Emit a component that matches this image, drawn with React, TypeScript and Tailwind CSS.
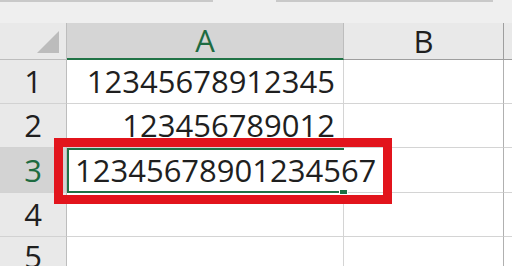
const rows = [
  { n: '1', value: '12345678912345' },
  { n: '2', value: '123456789012' },
  { n: '3', value: '12345678901234567', active: true },
  { n: '4', value: '' },
  { n: '5', value: '' },
];

const heights = ['h-[44px]', 'h-[44px]', 'h-[45px]', 'h-[44px]', 'h-[40px]'];

export default function App() {
  return (
    <div className="relative w-[512px] h-[266px] overflow-hidden bg-white font-['Open_Sans',sans-serif] text-[31px] text-[#1f1f1f]">
      {/* formula bar edge */}
      <div className="h-[23px] bg-[#efefef]">
        <div className="flex h-[2px]">
          <div className="w-[213px] bg-[#c9c9c9]" />
          <div className="w-[63px]" />
          <div className="w-[217px] bg-[#c9c9c9]" />
        </div>
      </div>

      {/* column headers */}
      <div className="flex h-[37px] leading-none">
        <div className="relative w-[67px] shrink-0 border-r border-b border-[#bdbdbd] bg-[#e9e9e9]">
          <svg className="absolute left-[37px] top-[8px]" width="23" height="23" viewBox="0 0 23 23">
            <polygon points="0,22 22,0 22,22" fill="#bcbcbc" />
          </svg>
        </div>
        <div className="flex w-[277px] shrink-0 items-center justify-center border-r border-[#bdbdbd] border-b-2 border-b-[#217346] bg-[#d5d5d5] text-[#1e6b41]">
          A
        </div>
        <div className="flex w-[160px] shrink-0 items-center justify-center border-r border-b border-[#9e9e9e] bg-[#e9e9e9]">
          B
        </div>
        <div className="flex-1 border-b border-[#9e9e9e] bg-[#e9e9e9]" />
      </div>

      {rows.map((r, i) => (
        <div key={r.n} className={`flex ${heights[i]} leading-none`}>
          <div
            className={`flex w-[67px] shrink-0 items-center justify-center border-r border-b border-r-[#bdbdbd] border-b-[#d2d2d2] ${
              r.active ? 'bg-[#d3d3d3] text-[#1e6b41]' : 'bg-[#e9e9e9]'
            }`}
          >
            {r.n}
          </div>
          {r.active ? (
            <div className="relative z-10 flex w-[277px] shrink-0 items-center border-2 border-r-0 border-[#1e7145] bg-white pl-[6px] whitespace-nowrap">
              <span className="bg-white">{r.value}</span>
              <span className="ml-[2px] inline-block h-[42px] w-px bg-black" />
              <div className="absolute right-[-4px] bottom-[-4px] h-[6px] w-[9px] border border-white bg-[#1e7145]" />
            </div>
          ) : (
            <div className="flex w-[277px] shrink-0 items-center justify-end border-r border-b border-[#d4d4d4] pr-[8px]">
              {r.value}
            </div>
          )}
          <div className="w-[160px] shrink-0 border-r border-b border-[#d4d4d4] border-r-[#b0b0b0]" />
          <div className="flex-1 border-b border-[#d4d4d4]" />
        </div>
      ))}

      {/* red annotation box */}
      <div className="pointer-events-none absolute left-[54px] top-[138px] z-20 h-[66px] w-[338px] border-[9px] border-[#e2141c]" />
    </div>
  );
}
